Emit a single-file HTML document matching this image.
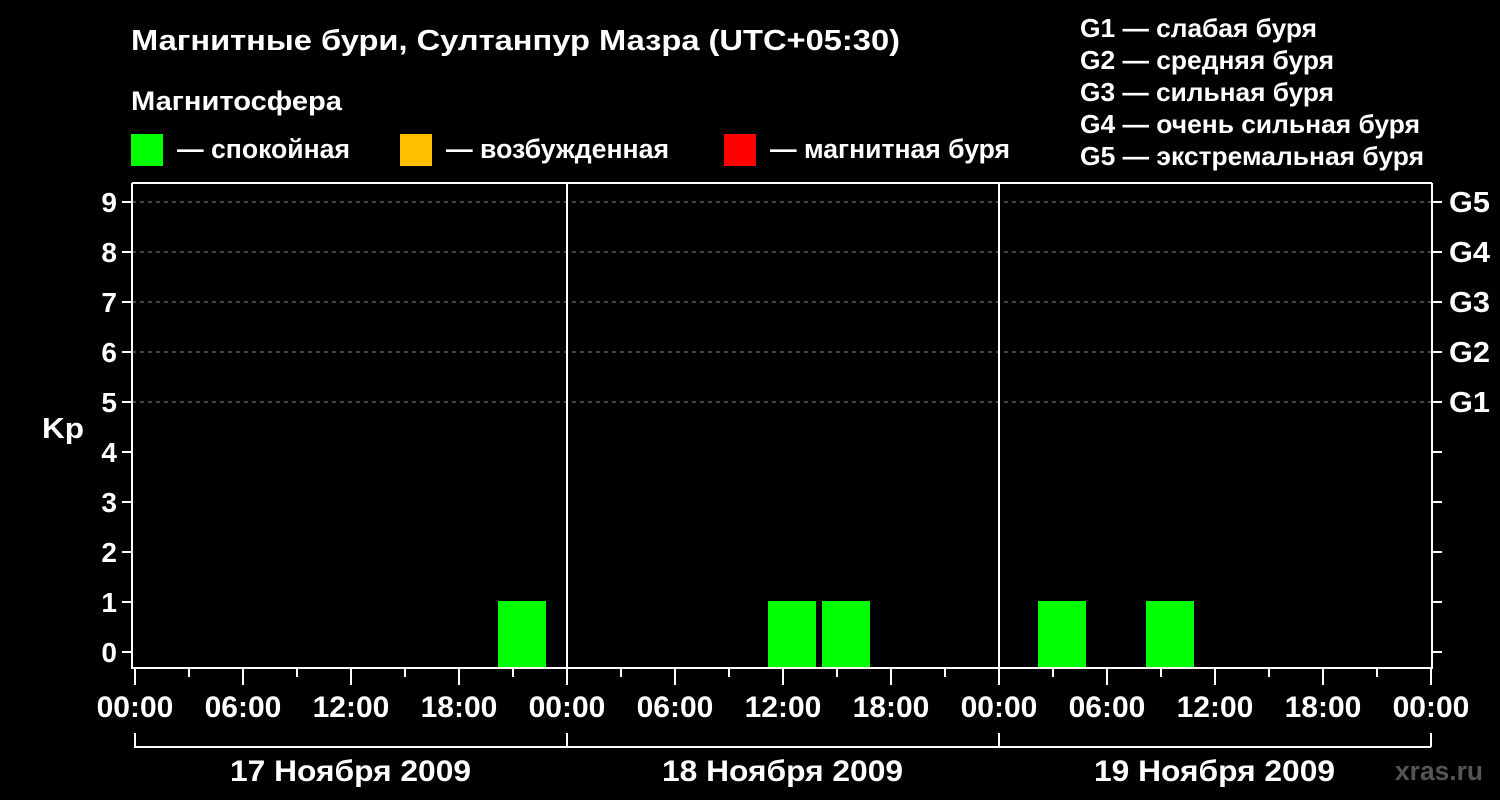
<!DOCTYPE html>
<html><head><meta charset="utf-8"><style>
body{margin:0;background:#000;width:1500px;height:800px;overflow:hidden}
svg{display:block}
text{font-family:"Liberation Sans",sans-serif;font-weight:bold;fill:#fff}
</style></head><body>
<svg width="1500" height="800" viewBox="0 0 1500 800">
<rect width="1500" height="800" fill="#000"/>
<text x="131" y="50" font-size="29" textLength="769" lengthAdjust="spacingAndGlyphs">Магнитные бури, Султанпур Мазра (UTC+05:30)</text>
<text x="131" y="110" font-size="27" textLength="211" lengthAdjust="spacingAndGlyphs">Магнитосфера</text>
<rect x="131" y="134" width="32" height="32" fill="#00ff00"/>
<text x="177" y="158" font-size="27" textLength="173" lengthAdjust="spacingAndGlyphs">— спокойная</text>
<rect x="400" y="134" width="32" height="32" fill="#ffc000"/>
<text x="446" y="158" font-size="27" textLength="223" lengthAdjust="spacingAndGlyphs">— возбужденная</text>
<rect x="724" y="134" width="32" height="32" fill="#ff0000"/>
<text x="770" y="158" font-size="27" textLength="240" lengthAdjust="spacingAndGlyphs">— магнитная буря</text>
<g font-size="26">
<text x="1080" y="37" textLength="237" lengthAdjust="spacingAndGlyphs">G1 — слабая буря</text>
<text x="1080" y="69" textLength="254" lengthAdjust="spacingAndGlyphs">G2 — средняя буря</text>
<text x="1080" y="101" textLength="254" lengthAdjust="spacingAndGlyphs">G3 — сильная буря</text>
<text x="1080" y="133" textLength="340" lengthAdjust="spacingAndGlyphs">G4 — очень сильная буря</text>
<text x="1080" y="165" textLength="344" lengthAdjust="spacingAndGlyphs">G5 — экстремальная буря</text>
</g>
<g stroke="#888" stroke-width="1" stroke-dasharray="4,4">
<line x1="132" y1="202" x2="1432" y2="202"/><line x1="132" y1="252" x2="1432" y2="252"/>
<line x1="132" y1="302" x2="1432" y2="302"/><line x1="132" y1="352" x2="1432" y2="352"/>
<line x1="132" y1="402" x2="1432" y2="402"/>
</g>
<g fill="#00ff00">
<rect x="498" y="601" width="48" height="67"/>
<rect x="768" y="601" width="48" height="67"/>
<rect x="822" y="601" width="48" height="67"/>
<rect x="1038" y="601" width="48" height="67"/>
<rect x="1146" y="601" width="48" height="67"/>
</g>
<g stroke="#fff" stroke-width="2" fill="none">
<polyline points="132,183 132,668 1432,668 1432,183"/>
<line x1="132" y1="183" x2="1432" y2="183"/>
<line x1="567" y1="183" x2="567" y2="668"/>
<line x1="999" y1="183" x2="999" y2="668"/>
<path d="M122 202h10M122 252h10M122 302h10M122 352h10M122 402h10M122 452h10M122 502h10M122 552h10M122 602h10M122 652h10"/>
<path d="M1432 202h10M1432 252h10M1432 302h10M1432 352h10M1432 402h10M1432 452h10M1432 502h10M1432 552h10M1432 602h10M1432 652h10"/>
<path d="M135 669v16M189 669v8M243 669v16M297 669v8M351 669v16M405 669v8M459 669v16M513 669v8M567 669v16M621 669v8M675 669v16M729 669v8M783 669v16M837 669v8M891 669v16M945 669v8M999 669v16M1053 669v8M1107 669v16M1161 669v8M1215 669v16M1269 669v8M1323 669v16M1377 669v8M1431 669v16"/>
<path d="M135 733v14H1431M567 733v14M999 733v14M1431 733v14"/>
</g>
<g font-size="28" text-anchor="end">
<text x="117" y="212">9</text><text x="117" y="262">8</text><text x="117" y="312">7</text>
<text x="117" y="362">6</text><text x="117" y="412">5</text><text x="117" y="462">4</text>
<text x="117" y="512">3</text><text x="117" y="562">2</text><text x="117" y="612">1</text>
<text x="117" y="662">0</text>
</g>
<text x="42" y="438" font-size="29" textLength="42" lengthAdjust="spacingAndGlyphs">Kp</text>
<g font-size="29">
<text x="1449" y="212" textLength="41" lengthAdjust="spacingAndGlyphs">G5</text><text x="1449" y="262" textLength="41" lengthAdjust="spacingAndGlyphs">G4</text><text x="1449" y="312" textLength="41" lengthAdjust="spacingAndGlyphs">G3</text>
<text x="1449" y="362" textLength="41" lengthAdjust="spacingAndGlyphs">G2</text><text x="1449" y="412" textLength="41" lengthAdjust="spacingAndGlyphs">G1</text>
</g>
<g font-size="30" text-anchor="middle">
<text x="135" y="717">00:00</text><text x="243" y="717">06:00</text><text x="351" y="717">12:00</text><text x="459" y="717">18:00</text>
<text x="567" y="717">00:00</text><text x="675" y="717">06:00</text><text x="783" y="717">12:00</text><text x="891" y="717">18:00</text>
<text x="999" y="717">00:00</text><text x="1107" y="717">06:00</text><text x="1215" y="717">12:00</text><text x="1323" y="717">18:00</text>
<text x="1431" y="717">00:00</text>
</g>
<g font-size="30">
<text x="230" y="781" textLength="241" lengthAdjust="spacingAndGlyphs">17 Ноября 2009</text>
<text x="662" y="781" textLength="241" lengthAdjust="spacingAndGlyphs">18 Ноября 2009</text>
<text x="1094" y="781" textLength="241" lengthAdjust="spacingAndGlyphs">19 Ноября 2009</text>
</g>
<text x="1395" y="780" font-size="27" style="fill:#555" textLength="88" lengthAdjust="spacingAndGlyphs">xras.ru</text>
</svg>
</body></html>
